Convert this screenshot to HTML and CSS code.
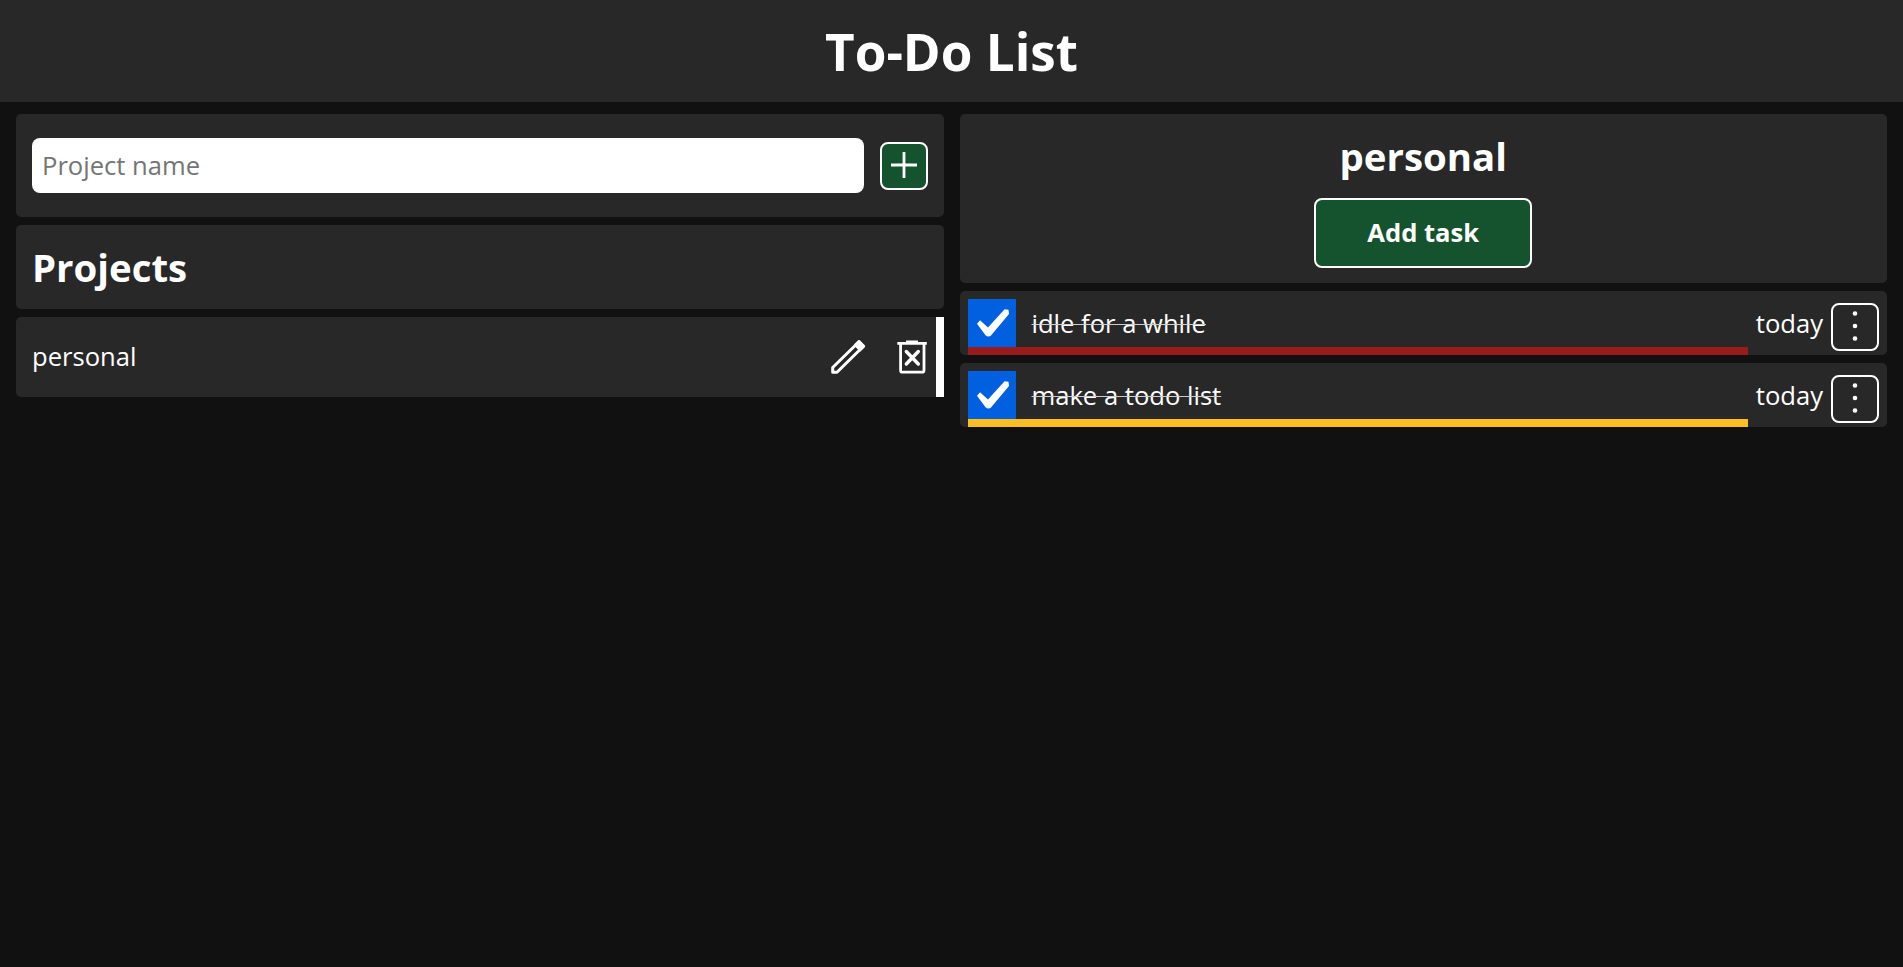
FILE: index.html
```html
<!DOCTYPE html>
<html lang="en">
<head>
<meta charset="utf-8">
<title>To-Do List</title>
<link rel="stylesheet" href="styles.css">
</head>
<body>
<header class="header"><h1 class="title">To-Do List</h1></header>
<main class="main">
  <section class="column">
    <form class="card project-form">
      <input class="project-input" type="text" placeholder="Project name">
      <button class="btn square" type="button" aria-label="Add project">
        <svg width="44" height="44" viewBox="0 0 44 44" fill="none" stroke="#fff" stroke-width="2.8"><path d="M22 8v26M9 21h26"/></svg>
      </button>
    </form>
    <div class="card heading"><h2 class="subtitle">Projects</h2></div>
    <div class="card project">
      <span class="project-name">personal</span>
      <svg class="icon" width="48" height="48" viewBox="0 0 48 48" fill="none" stroke="#fff" stroke-width="3" stroke-linejoin="round"><path d="M8.7 39.3v-4.8L35 8.8l4.4 4.4L13 39.3z"/><path d="M31.5 12L35 8.5l4.7 4.8-3.5 3.5z" fill="#fff"/></svg>
      <svg class="icon" width="48" height="48" viewBox="0 0 48 48" fill="none" stroke="#fff" stroke-width="2.8"><path d="M9.3 10.3h29.5M18 8.8h12"/><path d="M12.6 11v26.5q0 1.7 1.7 1.7h20q1.7 0 1.7-1.7V11"/><path d="M18.3 18.5l12 12.5M30.3 18.5L18.3 31" stroke-width="3.4" stroke-linecap="round"/></svg>
    </div>
  </section>
  <section class="column">
    <div class="card project-head">
      <h2 class="subtitle">personal</h2>
      <button class="btn add-task" type="button">Add task</button>
    </div>
    <div class="card task">
      <div class="task-main high">
        <svg class="check" width="48" height="48" viewBox="0 0 48 48"><path d="M9 24.7L12 21.2L20 28.5L36.6 10.3L40.5 10.8L41 15L23.2 36.2Q20.5 39 17.5 36.2Z" fill="#fff"/></svg>
        <span class="task-name">idle for a while</span>
      </div>
      <span class="date">today</span>
      <button class="btn square menu" type="button" aria-label="Task menu">
        <svg width="44" height="44" viewBox="0 0 44 44" fill="#fff"><circle cx="22" cy="8.5" r="2.3"/><circle cx="22" cy="21" r="2.3"/><circle cx="22" cy="33.5" r="2.3"/></svg>
      </button>
    </div>
    <div class="card task">
      <div class="task-main medium">
        <svg class="check" width="48" height="48" viewBox="0 0 48 48"><path d="M9 24.7L12 21.2L20 28.5L36.6 10.3L40.5 10.8L41 15L23.2 36.2Q20.5 39 17.5 36.2Z" fill="#fff"/></svg>
        <span class="task-name">make a todo list</span>
      </div>
      <span class="date">today</span>
      <button class="btn square menu" type="button" aria-label="Task menu">
        <svg width="44" height="44" viewBox="0 0 44 44" fill="#fff"><circle cx="22" cy="8.5" r="2.3"/><circle cx="22" cy="21" r="2.3"/><circle cx="22" cy="33.5" r="2.3"/></svg>
      </button>
    </div>
  </section>
</main>
</body>
</html>
```
FILE: styles.css
```css
* { box-sizing: border-box; }
body {
  margin: 0;
  min-height: 100vh;
  background: #111;
  color: #fff;
  font: 25.6px/35px "Open Sans", sans-serif;
}
.header {
  height: 102px;
  padding-top: 16px;
  background: #282828;
  text-align: center;
}
.title { margin: 0; font-size: 51.2px; line-height: 70px; }
.main {
  display: grid;
  grid-template-columns: 1fr 1fr;
  gap: 16px;
  padding: 12px 16px;
}
.column { display: flex; flex-direction: column; gap: 8px; }
.card { background: #282828; border-radius: 5px; }
.project-form {
  display: flex;
  align-items: center;
  gap: 16px;
  height: 103px;
  padding: 0 16px;
}
.project-input {
  flex: 1;
  min-width: 0;
  height: 55px;
  padding: 0 10px;
  border: 0;
  border-radius: 8px;
  background: #fff;
  font: inherit;
}
.project-input::placeholder { color: #757575; }
.btn {
  padding: 0;
  border: 2px solid #fff;
  border-radius: 8px;
  background: #14532d;
  color: #fff;
  font: inherit;
}
.square { flex: none; width: 48px; height: 48px; }
.square svg { display: block; }
.heading { height: 84px; padding: 16px; }
.subtitle { margin: 0; font-size: 38.4px; line-height: 52px; }
.project {
  display: flex;
  align-items: center;
  gap: 16px;
  height: 80px;
  padding: 0 0 0 16px;
  border-right: 8px solid #fff;
  border-radius: 5px 0 0 5px;
}
.project-name { flex: 1; padding-bottom: 2px; }
.project-head {
  display: flex;
  flex-direction: column;
  align-items: center;
  gap: 16px;
  height: 169px;
  padding-top: 16px;
}
.add-task { width: 218px; height: 70px; padding-bottom: 2px; font-weight: 700; }
.task {
  display: flex;
  gap: 8px;
  height: 64px;
  padding: 8px 8px 0;
}
.task-main {
  display: flex;
  flex: 1;
  gap: 16px;
  border-bottom: 8px solid;
}
.high { border-color: #991b1b; }
.medium { border-color: #fbbf24; }
.check { background: #0060df; }
.task-name { line-height: 50px; height: 48px; text-decoration: line-through 1px #ccc; }
.date { line-height: 50px; height: 48px; }
.menu { margin-top: 4px; background: transparent; }
```
